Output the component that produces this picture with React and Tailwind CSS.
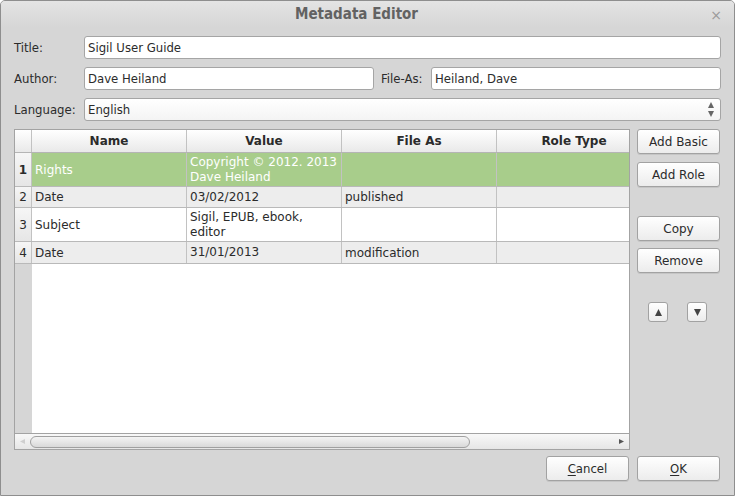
import React from "react";

const cond = "font-['DejaVu_Sans_Condensed','DejaVu_Sans',sans-serif] [font-stretch:condensed]";
const sans = "font-['DejaVu_Sans',sans-serif]";

const rows = [
  { n: "1", name: "Rights", value: ["Copyright © 2012. 2013", "Dave Heiland"], fileAs: "", sel: true, h: "h-[34px]" },
  { n: "2", name: "Date", value: ["03/02/2012"], fileAs: "published", alt: true, h: "h-[21px]" },
  { n: "3", name: "Subject", value: ["Sigil, EPUB, ebook,", "editor"], fileAs: "", h: "h-[34px]" },
  { n: "4", name: "Date", value: ["31/01/2013"], fileAs: "modification", alt: true, h: "h-[22px]" },
];

const Tri = ({ dir = "up", size = 7, color = "#444" }) => {
  const pts = {
    up: "0,7 3.5,0 7,7",
    down: "0,0 7,0 3.5,7",
    left: "7,0 7,7 0,3.5",
    right: "0,0 0,7 7,3.5",
  }[dir];
  return (
    <svg width={size} height={size} viewBox="0 0 7 7">
      <polygon points={pts} fill={color} />
    </svg>
  );
};

const Field = ({ value, className = "" }) => (
  <div
    className={`h-[23px] flex items-center px-[3px] bg-white border border-[#a5a5a5] rounded-[3px] text-[13px] text-[#2b2b2b] ${cond} ${className}`}
  >
    {value}
  </div>
);

const Btn = ({ children, className = "" }) => (
  <button
    className={`w-[83px] h-[25px] rounded-[3px] border border-[#a2a2a2] bg-gradient-to-b from-white to-[#ececec] shadow-[0_1px_0_rgba(0,0,0,0.08)] text-[12px] text-[#2b2b2b] ${sans} ${className}`}
  >
    {children}
  </button>
);

export default function App() {
  return (
    <div className="w-[735px] h-[496px] bg-[#d6d6d6] border border-[#8e8e8e] rounded-t-[5px] flex flex-col overflow-hidden">
      {/* title bar */}
      <div className="h-[26px] shrink-0 relative flex items-center justify-center pr-[22px] bg-gradient-to-b from-[#e4e4e4] to-[#d6d6d6]">
        <span className={`text-[15px] font-bold text-[#626262] ${cond}`}>Metadata Editor</span>
        <span className="absolute right-[12px] top-[4px] text-[14px] text-[#9a9a9a] font-['DejaVu_Sans',sans-serif]">×</span>
      </div>

      <div className="flex flex-col px-[13px] pt-[9px]">
        <div className="flex items-center h-[23px]">
          <span className={`w-[70px] text-[13px] text-[#2b2b2b] ${cond}`}>Title:</span>
          <Field value="Sigil User Guide" className="flex-1" />
        </div>
        <div className="flex items-center h-[23px] mt-[8px]">
          <span className={`w-[70px] text-[13px] text-[#2b2b2b] ${cond}`}>Author:</span>
          <Field value="Dave Heiland" className="w-[290px]" />
          <span className={`w-[57px] pl-[7px] text-[13px] text-[#2b2b2b] ${cond}`}>File-As:</span>
          <Field value="Heiland, Dave" className="flex-1" />
        </div>
        <div className="flex items-center h-[23px] mt-[8px]">
          <span className={`w-[70px] text-[13px] text-[#2b2b2b] ${cond}`}>Language:</span>
          <div className={`flex-1 h-[23px] flex items-center justify-between pl-[3px] pr-[6px] bg-gradient-to-b from-white to-[#f4f4f4] border border-[#a5a5a5] rounded-[3px] text-[13px] text-[#2b2b2b] ${cond}`}>
            <span>English</span>
            <span className="flex flex-col items-center gap-[3px]">
              <Tri dir="up" size={6} color="#666" />
              <Tri dir="down" size={6} color="#666" />
            </span>
          </div>
        </div>

        <div className="flex mt-[8px] gap-[7px]">
          {/* table */}
          <div className="w-[616px] h-[321px] border border-[#a3a3a3] bg-white flex flex-col">
            <div className="flex-1 flex flex-col overflow-hidden">
              <div className={`flex h-[23px] shrink-0 bg-gradient-to-b from-white to-[#e9e9e9] border-b border-[#b5b5b5] text-[12px] font-bold text-[#2b2b2b] ${sans}`}>
                <div className="w-[17px] shrink-0 border-r border-[#c2c2c2]" />
                {["Name", "Value", "File As", "Role Type"].map((c) => (
                  <div
                    key={c}
                    className="w-[155px] shrink-0 flex items-center justify-center border-r border-[#c2c2c2]"
                  >
                    {c}
                  </div>
                ))}
              </div>
              {rows.map((r) => (
                <div
                  key={r.n}
                  className={`flex ${r.h} shrink-0 border-b border-[#b9b9b9] text-[12px] ${sans} ${
                    r.sel ? "bg-[#a8cd8b] text-white" : r.alt ? "bg-[#ededed] text-[#2b2b2b]" : "bg-white text-[#2b2b2b]"
                  }`}
                >
                  <div
                    className={`w-[17px] shrink-0 flex items-center justify-center bg-gradient-to-b from-[#f6f6f6] to-[#e6e6e6] border-r border-[#c2c2c2] text-[#2b2b2b] ${
                      r.sel ? "font-bold" : ""
                    }`}
                  >
                    {r.n}
                  </div>
                  <div className="w-[155px] shrink-0 flex items-center px-[3px] border-r border-[#c2c2c2]">{r.name}</div>
                  <div className="w-[155px] shrink-0 flex flex-col justify-center px-[3px] leading-[15px] border-r border-[#c2c2c2]">
                    {r.value.map((v) => (
                      <span key={v}>{v}</span>
                    ))}
                  </div>
                  <div className="w-[155px] shrink-0 flex items-center px-[3px] border-r border-[#c2c2c2]">{r.fileAs}</div>
                  <div className="w-[155px] shrink-0" />
                </div>
              ))}
              <div className="flex-1 flex">
                <div className="w-[17px] bg-[#d6d6d6]" />
                <div className="flex-1 bg-white" />
              </div>
            </div>
            {/* scrollbar */}
            <div className="h-[16px] shrink-0 border-t border-[#a3a3a3] bg-gradient-to-b from-[#f8f8f8] to-[#e6e6e6] flex items-center pl-[5px] pr-[5px] gap-[5px]">
              <Tri dir="left" size={5} color="#cfcfcf" />
              <div className="w-[440px] h-[12px] rounded-full border border-[#a0a0a0] bg-gradient-to-b from-[#f4f4f4] to-[#d9d9d9]" />
              <div className="flex-1" />
              <Tri dir="right" size={5} color="#555" />
            </div>
          </div>

          {/* side buttons */}
          <div className="flex flex-col">
            <Btn>Add Basic</Btn>
            <Btn className="mt-[8px]">Add Role</Btn>
            <Btn className="mt-[29px]">Copy</Btn>
            <Btn className="mt-[7px]">Remove</Btn>
            <div className="flex gap-[19px] pl-[11px] mt-[29px]">
              <button className="w-[20px] h-[20px] rounded-[3px] border border-[#a2a2a2] bg-gradient-to-b from-white to-[#ececec] flex items-center justify-center">
                <Tri dir="up" size={7} color="#444" />
              </button>
              <button className="w-[20px] h-[20px] rounded-[3px] border border-[#a2a2a2] bg-gradient-to-b from-white to-[#ececec] flex items-center justify-center">
                <Tri dir="down" size={7} color="#444" />
              </button>
            </div>
          </div>
        </div>

        <div className="flex justify-end gap-[8px] mt-[6px] pr-[1px]">
          <Btn className={`${cond} text-[13px]`}>
            <span className="underline underline-offset-2">C</span>ancel
          </Btn>
          <Btn className={`${cond} text-[13px] to-[#e4ead8]`}>
            <span className="underline underline-offset-2">O</span>K
          </Btn>
        </div>
      </div>
    </div>
  );
}
